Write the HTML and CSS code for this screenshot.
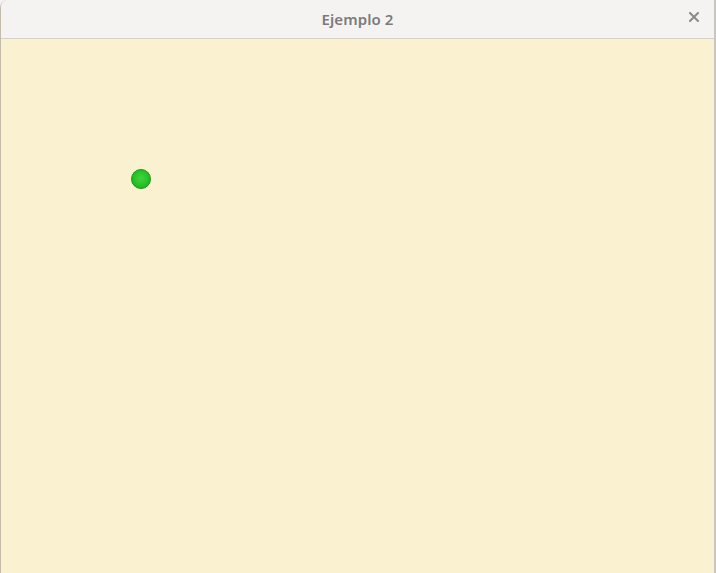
FILE: index.html
```html
<!DOCTYPE html>
<html lang="es">
<head>
<meta charset="utf-8">
<title>Ejemplo 2</title>
<link rel="stylesheet" href="styles.css">
</head>
<body>
<div class="window">
  <header class="titlebar">
    <span class="title">Ejemplo 2</span>
    <button class="close" aria-label="Cerrar">
      <svg width="10" height="10" viewBox="0 0 10 10"><path d="M1 1L9 9M9 1L1 9" stroke="#8a8a8a" stroke-width="2" stroke-linecap="square"/></svg>
    </button>
  </header>
  <main class="canvas">
    <div class="ball"></div>
  </main>
</div>
</body>
</html>
```
FILE: styles.css
```css
html, body {
  margin: 0;
  padding: 0;
  width: 716px;
  height: 573px;
  overflow: hidden;
  background: #f4f3f1;
}
.window {
  display: flex;
  flex-direction: column;
  width: 716px;
  height: 573px;
  box-sizing: border-box;
  border-left: 1px solid #c4bcaa;
  border-right: 2px solid #c8c6c2;
  border-top-left-radius: 8px;
  overflow: hidden;
}
.titlebar {
  height: 38px;
  flex: 0 0 38px;
  background: #f4f3f1;
  border-bottom: 1px solid #d6d1c8;
  display: flex;
  align-items: center;
  justify-content: center;
  position: relative;
}
.title {
  font-family: "Noto Sans", "DejaVu Sans", sans-serif;
  font-weight: 600;
  font-size: 15px;
  color: #7b7b7b;
  margin-left: 0;
  letter-spacing: 0.1px;
}
.close {
  position: absolute;
  right: 15px;
  top: 12px;
  width: 10px;
  height: 10px;
  padding: 0;
  border: 0;
  background: none;
  display: flex;
}
.canvas {
  flex: 1;
  background: #faf1d0;
  position: relative;
}
.ball {
  position: absolute;
  left: 130px;
  top: 130px;
  width: 18px;
  height: 18px;
  border-radius: 50%;
  background: radial-gradient(circle at 50% 45%, #3fd63f 0%, #22c022 60%, #17a517 100%);
  border: 1px solid #1a8f1a;
}
```
